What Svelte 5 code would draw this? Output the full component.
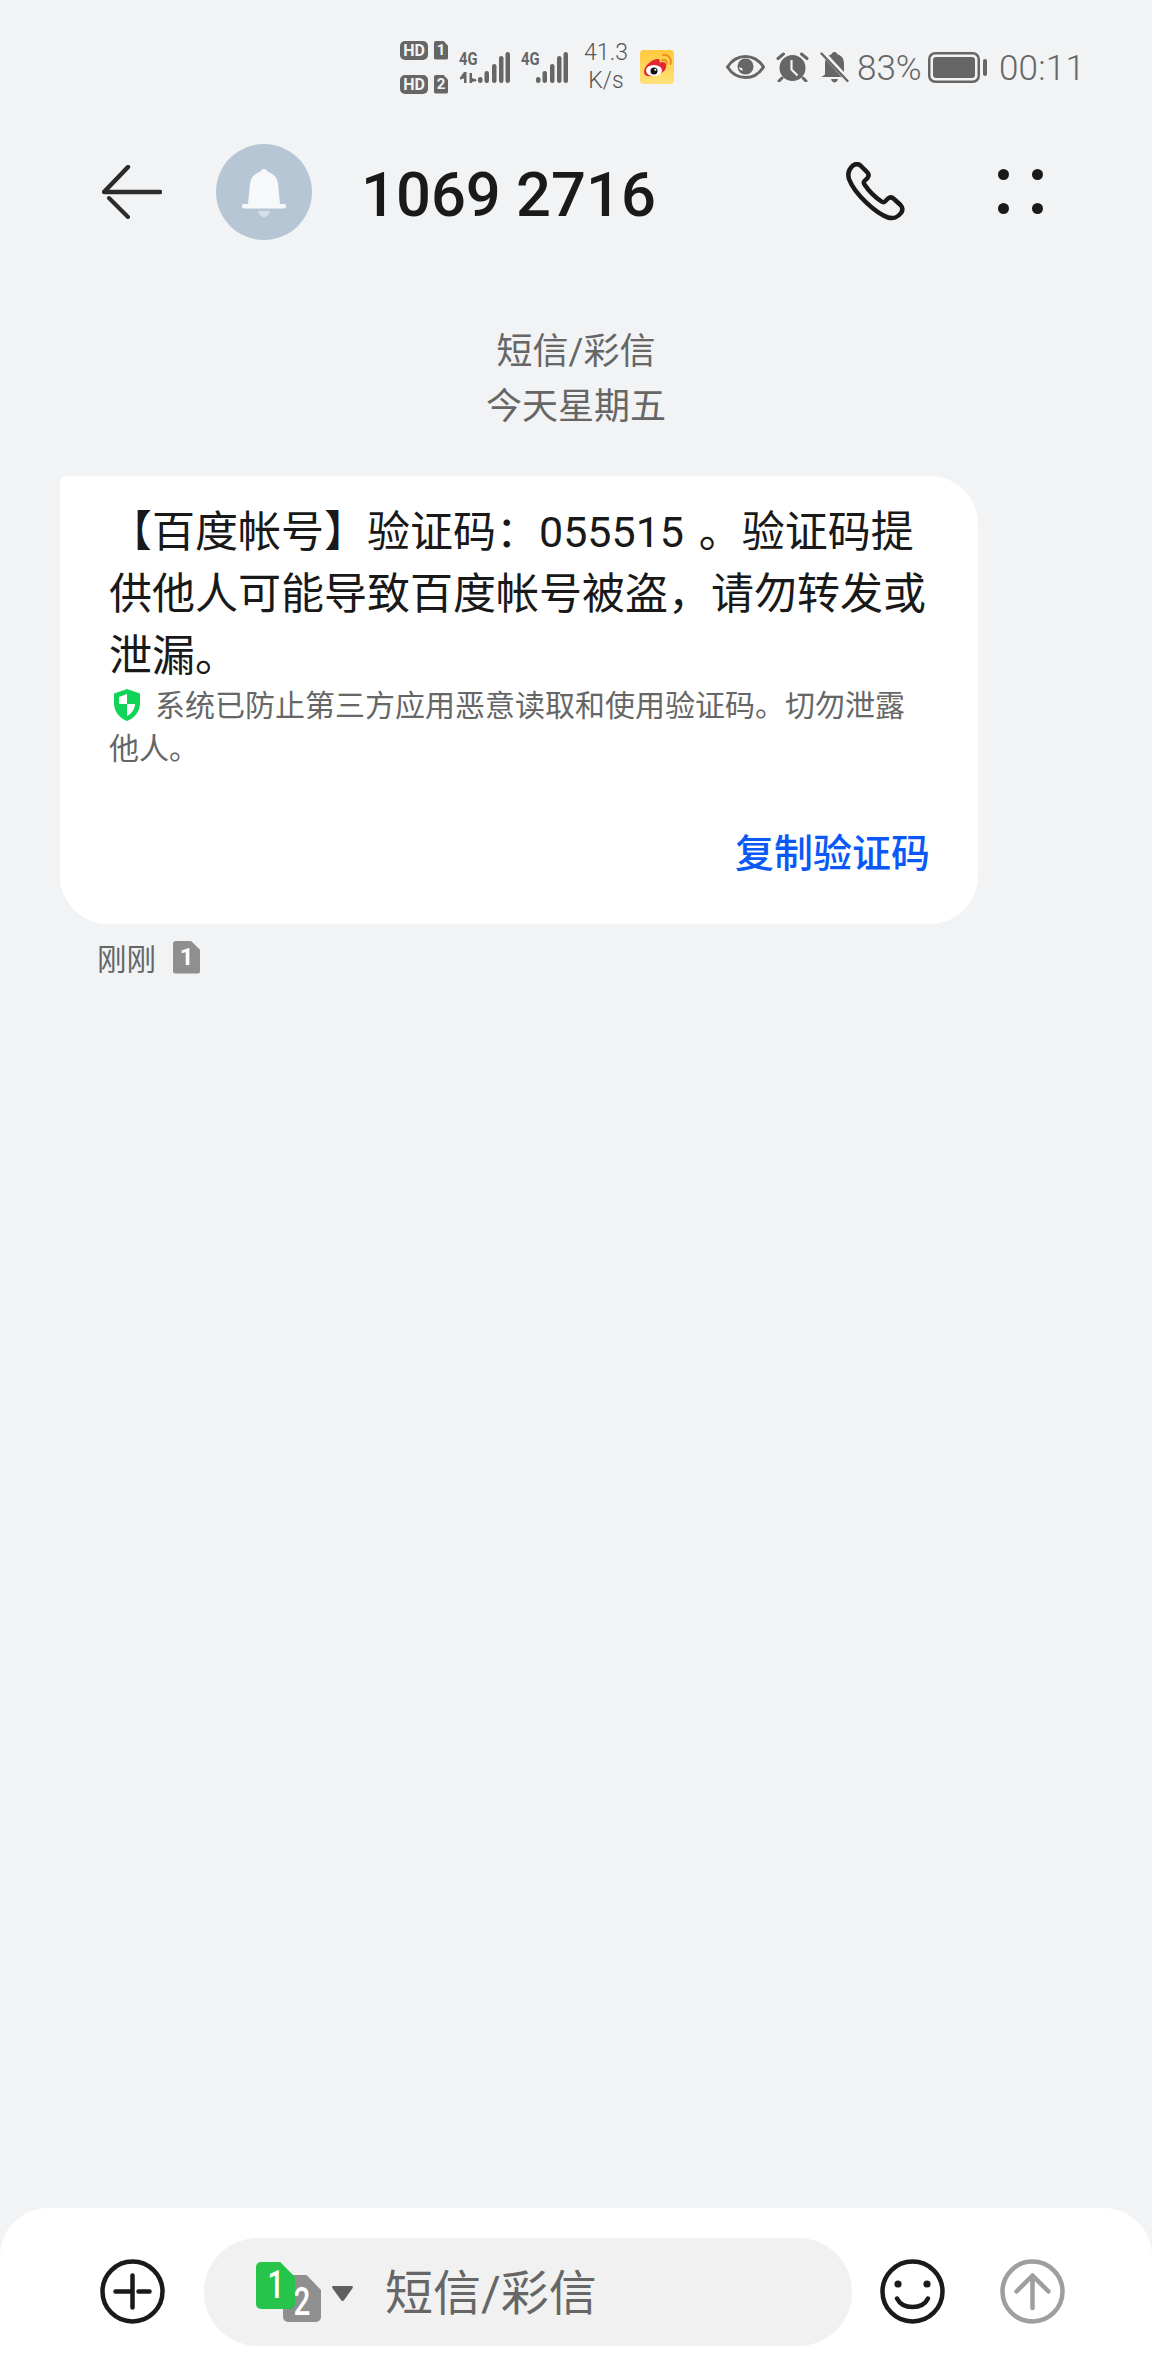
<script>
  const message = '【百度帐号】验证码\uFF1A055515 。验证码提供他人可能导致百度帐号被盗\uFF0C请勿转发或泄漏。';
</script>

<div class="page">
  <div class="status">
    <div class="hd">
      <div class="hdrow"><span class="hdbadge">HD</span><span class="simtag">1</span></div>
      <div class="hdrow"><span class="hdbadge">HD</span><span class="simtag">2</span></div>
    </div>
    <div class="signal first">
      <span class="fourg">4G</span>
      <svg class="arrows" width="20" height="11" viewBox="0 0 20 11" fill="#666">
        <path d="M5 0h2.500v11H5V6.500L1 7.500V5.500zM10.500 1H13v5l4.500 1.500v1.500L13 10v1h-2.500z"/>
      </svg>
      <svg class="bars" width="32" height="31" viewBox="0 0 32 31" fill="#666">
        <rect x="0" y="25" width="4.500" height="6" rx="2.250"/><rect x="6.500" y="19" width="4.500" height="12" rx="2.250"/><rect x="14" y="12" width="4.500" height="19" rx="2.250"/><rect x="21" y="4" width="4.500" height="27" rx="2.250"/><rect x="27.500" y="0" width="4.500" height="31" rx="2.250"/>
      </svg>
    </div>
    <div class="signal second">
      <span class="fourg">4G</span>
      <svg class="bars" width="32" height="31" viewBox="0 0 32 31" fill="#666">
        <rect x="0" y="25" width="4.500" height="6" rx="2.250"/><rect x="6.500" y="19" width="4.500" height="12" rx="2.250"/><rect x="14" y="12" width="4.500" height="19" rx="2.250"/><rect x="21" y="4" width="4.500" height="27" rx="2.250"/><rect x="27.500" y="0" width="4.500" height="31" rx="2.250"/>
      </svg>
    </div>
    <div class="speed"><span>41.3</span><span>K/s</span></div>
    <svg class="weibo" width="34" height="34" viewBox="0 0 34 34">
      <defs><linearGradient id="wb" x1="0" y1="0" x2="0" y2="1"><stop offset="0" stop-color="#ffc93c"/><stop offset="1" stop-color="#ffe27a"/></linearGradient></defs>
      <rect width="34" height="34" rx="4" fill="url(#wb)"/>
      <path d="M4 22c0-6 7-12 13-13 3-.5 3 2 2.500 3.500 3-1 6-1 6.500 2 .5 2 1 8-11 11C8 27 4 26 4 22z" fill="#e6262e"/>
      <ellipse cx="14" cy="20.500" rx="8" ry="5.500" fill="#fff"/>
      <circle cx="14" cy="21" r="3.500" fill="#111"/>
      <circle cx="15.300" cy="19.800" r="1" fill="#fff"/>
      <path d="M22 10c3-1 5 1 4.500 4M23 5c5-1 9 3 7.500 9" fill="none" stroke="#f08a1c" stroke-width="1.800" stroke-linecap="round"/>
    </svg>
    <svg class="eye" width="39" height="24" viewBox="0 0 39 24">
      <path d="M1.500 12C6 5 12 1.500 19.500 1.500S33 5 37.500 12C33 19 27 22.500 19.500 22.500S6 19 1.500 12z" fill="none" stroke="#666" stroke-width="3"/>
      <circle cx="19.500" cy="11.500" r="8" fill="#666"/>
      <path d="M13 12.500c2-.5 3.500.5 4 3-2.500 0-3.700-1-4-3z" fill="#f1f3f5"/>
    </svg>
    <svg class="alarm" width="33" height="30" viewBox="0 0 33 30">
      <circle cx="16.500" cy="16" r="13" fill="#666"/>
      <path d="M15.500 8v9.500l6 6" fill="none" stroke="#f1f3f5" stroke-width="2.200"/>
      <path d="M2 6.500 7.500 2M31 6.500 25.500 2M6 26l-3 3M27 26l3 3" fill="none" stroke="#666" stroke-width="3" stroke-linecap="round"/>
    </svg>
    <svg class="belloff" width="29" height="31" viewBox="0 0 29 31">
      <path d="M14.500 0c2 0 2.500 1 2.800 2.200C22 3.500 24 7 24 12v10.500l3.500 2.500H1.500L5 22.500V12c0-5 2-8.500 6.700-9.800C12 1 12.500 0 14.500 0z" fill="#666"/>
      <path d="M11 27h7c-.5 2.300-2 3.500-3.500 3.500S11.500 29.300 11 27z" fill="#666"/>
      <path d="M3 1l25 27" stroke="#f1f3f5" stroke-width="5"/>
      <path d="M1.500 1.500 27.500 29" stroke="#666" stroke-width="2.400" stroke-linecap="round"/>
    </svg>
    <span class="pct">83%</span>
    <svg class="battery" width="59" height="31" viewBox="0 0 59 31">
      <rect x="1.250" y="1.250" width="49.500" height="28.500" rx="6" fill="none" stroke="#666" stroke-width="2.500"/>
      <rect x="5" y="5" width="42" height="21" rx="3" fill="#666"/>
      <rect x="55" y="7" width="4" height="17" rx="2" fill="#666"/>
    </svg>
    <span class="time">00:11</span>
  </div>

  <header class="head">
    <svg class="back" width="60" height="54" viewBox="0 0 60 54" fill="none" stroke="#2b2b2b" stroke-width="4.500" stroke-linecap="round" stroke-linejoin="round">
      <path d="M26 2 2 27h56"/><path d="M7 33l19 19" stroke-width="4"/>
    </svg>
    <div class="avatar">
      <svg width="46" height="48" viewBox="0 0 46 48">
        <path d="M23 0c2 0 3 1 3.500 2.500C33 5 36.500 9 37 15l2 20h4a2 2 0 0 1 0 4.500H3a2 2 0 0 1 0-4.500h4l2-20C9.500 9 13 5 19.500 2.500 20 1 21 0 23 0z" fill="#f6f8fa"/>
        <path d="M17 42h12c-.5 3.500-3 6-6 6s-5.500-2.500-6-6z" fill="#d6e0e9"/>
      </svg>
    </div>
    <h1 class="title">1069 2716</h1>
    <svg class="phone" width="60" height="60" viewBox="0 0 60 60" fill="none" stroke="#1a1a1a" stroke-width="4.500" stroke-linejoin="round">
      <path d="M7 3.500c3-2 6-1.500 8 .5l6 6c2 2 2 4 .5 6l-3 3c-1 1-1 2 0 3.500 4 6 11 13 17 17 1.500 1 2.500 1 3.500 0l3-3c2-1.500 4-1.500 6 .5l6.500 6c2 2 2.500 5 .5 8-3 4-8 6-13 4.500C31 52 9 33 3 17 1.500 12 3 7 7 3.500z"/>
    </svg>
    <svg class="more" width="45" height="45" viewBox="0 0 45 45" fill="#1a1a1a">
      <circle cx="5.500" cy="5.500" r="5.500"/><circle cx="39.500" cy="5.500" r="5.500"/><circle cx="5.500" cy="39.500" r="5.500"/><circle cx="39.500" cy="39.500" r="5.500"/>
    </svg>
  </header>

  <main class="main">
    <div class="dates">
      <div>短信/彩信</div>
      <div>今天星期五</div>
    </div>
    <article class="bubble">
      <p class="msg">{message}</p>
      <p class="note"><svg class="shield" width="28" height="32" viewBox="0 0 28 32">
          <path d="M14 0l13 4.500V14c0 9-5.500 15-13 18C6.500 29 1 23 1 14V4.500z" fill="#0fd458"/>
          <path d="M14 5 6 8v7h8zM14 15h8v1c-.8 5-4 9-8 11z" fill="#fff"/>
        </svg>系统已防止第三方应用恶意读取和使用验证码。切勿泄露他人。</p>
      <div class="action">复制验证码</div>
    </article>
    <div class="meta">
      <span>刚刚</span>
      <span class="simchip">1</span>
    </div>
  </main>

  <footer class="foot">
    <svg class="ic" width="65" height="65" viewBox="0 0 65 65" fill="none" stroke="#1a1a1a" stroke-width="4.500" stroke-linecap="round">
      <circle cx="32.500" cy="32.500" r="30"/>
      <path d="M32.500 16.500v32M15.500 32.500H32M38.500 32.500h11"/>
    </svg>
    <div class="input">
      <div class="sims">
        <span class="s2"><span class="digit">2</span></span>
        <span class="s1"><span class="digit">1</span></span>
      </div>
      <svg class="tri" width="21" height="15" viewBox="0 0 21 15"><path d="M1.500 0h18c1.200 0 1.800 1.200 1 2.200l-8.500 12c-.8 1-2 1-2.800 0L.5 2.200C-.3 1.200.3 0 1.500 0z" fill="#5f5f5f"/></svg>
      <span class="ph">短信/彩信</span>
    </div>
    <svg class="ic smile" width="65" height="65" viewBox="0 0 65 65" fill="none" stroke="#1a1a1a" stroke-width="4.500" stroke-linecap="round">
      <circle cx="32.500" cy="32.500" r="30"/>
      <circle cx="18" cy="25" r="3.600" fill="#1a1a1a" stroke="none"/><circle cx="47" cy="25" r="3.600" fill="#1a1a1a" stroke="none"/>
      <path d="M17 39.500C20 45.500 26 48 32.500 48S45 45.500 48 39.500"/>
    </svg>
    <svg class="ic send" width="65" height="65" viewBox="0 0 65 65" fill="none" stroke="#9e9e9e" stroke-width="4.500" stroke-linecap="round" stroke-linejoin="round">
      <circle cx="32.500" cy="32.500" r="30"/>
      <path d="M32.500 49V16.500M16.500 32.500l16-16 16 16"/>
    </svg>
  </footer>
</div>

<style>
  :global(body) { margin: 0; background: #f1f3f5; }
  .page {
    width: 1152px; height: 2376px; display: flex; flex-direction: column;
    background: #f1f3f5; overflow: hidden;
    font-family: Roboto, "Noto Sans CJK SC", sans-serif;
  }
  p, h1 { margin: 0; }

  .status {
    height: 134px; flex: none; box-sizing: border-box; display: flex; align-items: center;
    padding: 0 0 0 400px; color: #666;
  }
  .status > * { flex: none; }
  .hd { display: flex; flex-direction: column; gap: 15px; width: 48px; }
  .hdrow { display: flex; gap: 6px; }
  .hdbadge {
    width: 28px; height: 19px; background: #666; color: #f1f3f5; border-radius: 5px;
    font: 700 16px/19px Roboto, sans-serif; text-align: center;
  }
  .simtag {
    width: 14px; height: 19px; background: #666; color: #f1f3f5; border-radius: 2px;
    clip-path: polygon(0 0, 65% 0, 100% 28%, 100% 100%, 0 100%);
    font: 700 15px/19px Roboto, sans-serif; text-align: center;
  }
  .signal { position: relative; height: 31px; }
  .signal.first { width: 51px; margin-left: 11px; }
  .signal.second { width: 47px; margin-left: 11px; }
  .fourg {
    position: absolute; left: 0; top: 0; font: 700 18px/14px Roboto, sans-serif; color: #666;
    transform: scaleX(.82); transform-origin: left;
  }
  .arrows { position: absolute; left: 0; top: 20px; }
  .bars { position: absolute; right: 0; top: 0; }
  .speed {
    width: 44px; margin-left: 16px; display: flex; flex-direction: column; align-items: center;
    font-size: 23px; line-height: 28px; font-weight: 300; color: #555;
  }
  .weibo { margin-left: 12px; }
  .eye { margin-left: 52px; }
  .alarm { margin-left: 11px; }
  .belloff { margin-left: 11px; }
  .pct { margin-left: 8px; width: 64px; padding-top: 4px; font-size: 35px; font-weight: 300; white-space: nowrap; line-height: 40px; }
  .battery { margin-left: 7px; }
  .time { margin-left: 12px; padding-top: 4px; font-size: 35px; font-weight: 300; line-height: 40px; letter-spacing: .2px; white-space: nowrap; }

  .head { height: 116px; flex: none; display: flex; align-items: center; padding-left: 102px; }
  .avatar {
    width: 96px; height: 96px; border-radius: 50%; background: #b7c6d5; margin-left: 54px;
    display: flex; align-items: center; justify-content: center;
  }
  .avatar svg { margin-top: 2px; }
  .title { margin-left: 49px; width: 485px; padding-top: 6px; font-size: 61.5px; font-weight: 500; color: #1a1a1a; line-height: 72px; white-space: nowrap; }
  .more { margin-left: 92px; margin-top: -1px; }
  .phone { margin-top: -1px; }

  .main { flex: 1; display: flex; flex-direction: column; }
  .dates { margin-top: 75px; margin-bottom: -2px; text-align: center; font-size: 36px; line-height: 55px; color: #666; }
  .bubble {
    margin: 43px 0 0 60px; width: 918px; height: 448px; box-sizing: border-box; background: #fff;
    border-radius: 6px 48px 48px 48px; padding: 25px 48px 0 49px; display: flex; flex-direction: column;
  }
  .msg { font-size: 43px; line-height: 62px; color: #191919; word-spacing: 4px; }
  .note { font-size: 30px; line-height: 43px; color: #666; margin-top: -3px; }
  .shield { vertical-align: -5px; margin: 0 14px 0 4px; }
  .action { margin-top: auto; margin-bottom: 40px; text-align: right; font-size: 39px; line-height: 60px; font-weight: 500; color: #0a59f7; }
  .meta { display: flex; align-items: center; margin: 14px 0 0 97px; height: 38px; font-size: 29.5px; color: #666; }
  .simchip {
    width: 27px; height: 33px; margin-left: 17px; background: #8f8f8f; color: #fff;
    border-radius: 3px; clip-path: polygon(0 0, 65% 0, 100% 28%, 100% 100%, 0 100%);
    font: 700 24px/33px Roboto, sans-serif; text-align: center;
  }

  .foot {
    height: 168px; flex: none; box-sizing: border-box; background: #fff; border-radius: 48px 48px 0 0;
    display: flex; padding: 30px 0 0 100px; align-items: flex-start;
  }
  .ic { margin-top: 21px; flex: none; }
  .input {
    margin-left: 39px; width: 648px; height: 108px; border-radius: 54px; background: #f1f1f1;
    display: flex; align-items: center; padding-left: 52px; box-sizing: border-box;
  }
  .sims { position: relative; width: 65px; height: 60px; flex: none; }
  .s1, .s2 {
    position: absolute; text-align: center; color: #fff; font: 500 38px/47px Roboto, sans-serif;
    border-radius: 5px; clip-path: polygon(0 0, 62% 0, 100% 32%, 100% 100%, 0 100%);
  }
  .s1 { left: 0; top: 0; width: 39px; height: 47px; background: #27c44c; }
  .s2 { left: 27px; top: 13px; width: 38px; height: 47px; background: #8f8f8f; line-height: 54px; }
  .digit { display: inline-block; transform: scaleX(.78); }
  .tri { margin-left: 11px; flex: none; margin-top: 3px; }
  .ph { margin-left: 32px; padding-top: 4px; font-size: 48px; color: #666; line-height: 60px; white-space: nowrap; }
  .smile { margin-left: 28px; }
  .send { margin-left: 55px; }
</style>
